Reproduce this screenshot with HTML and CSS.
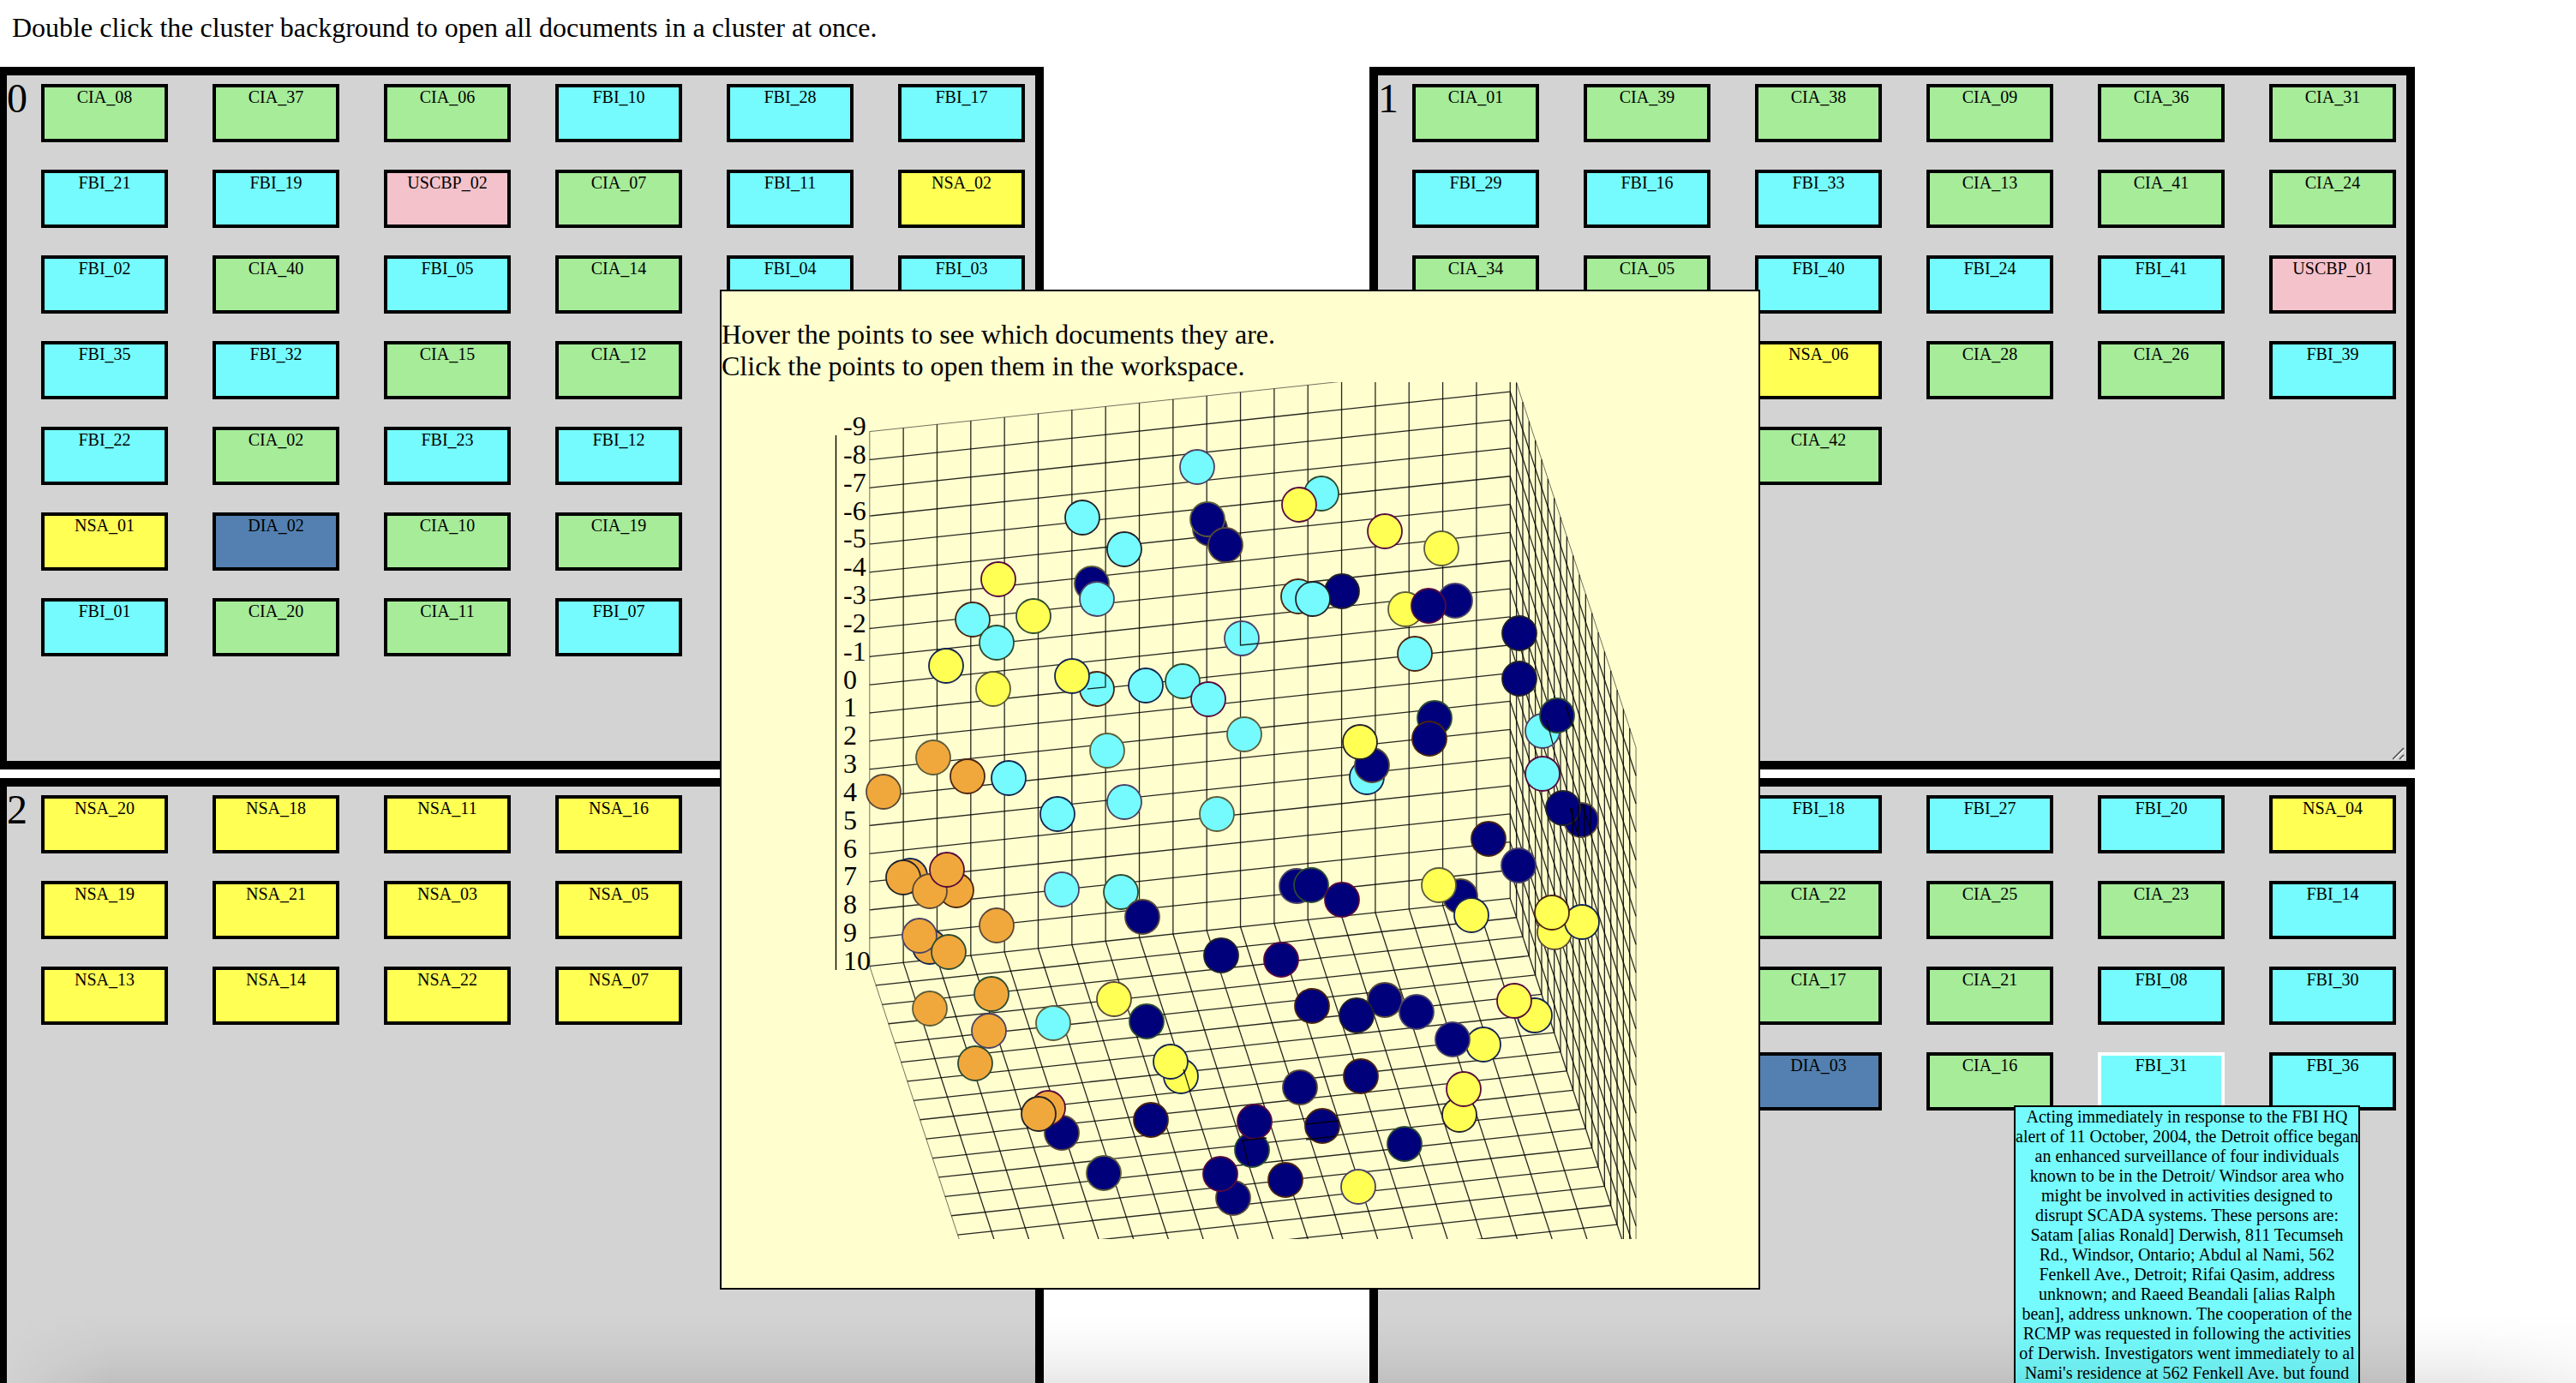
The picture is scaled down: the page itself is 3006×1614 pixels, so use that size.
FILE: index.html
```
<!DOCTYPE html>
<html lang="en">
<head>
<meta charset="utf-8">
<title>Document clusters</title>
<link rel="stylesheet" href="styles.css">
</head>
<body>
<p class="intro">Double click the cluster background to open all documents in a cluster at once.</p>

<main class="workspace">
  <section class="cluster">
    <h2 class="cluster-id">0</h2>
    <div class="docs">
      <button class="doc cia">CIA_08</button><button class="doc cia">CIA_37</button><button class="doc cia">CIA_06</button><button class="doc fbi">FBI_10</button><button class="doc fbi">FBI_28</button><button class="doc fbi">FBI_17</button>
      <button class="doc fbi">FBI_21</button><button class="doc fbi">FBI_19</button><button class="doc uscbp">USCBP_02</button><button class="doc cia">CIA_07</button><button class="doc fbi">FBI_11</button><button class="doc nsa">NSA_02</button>
      <button class="doc fbi">FBI_02</button><button class="doc cia">CIA_40</button><button class="doc fbi">FBI_05</button><button class="doc cia">CIA_14</button><button class="doc fbi">FBI_04</button><button class="doc fbi">FBI_03</button>
      <button class="doc fbi col-1">FBI_35</button><button class="doc fbi">FBI_32</button><button class="doc cia">CIA_15</button><button class="doc cia">CIA_12</button>
      <button class="doc fbi col-1">FBI_22</button><button class="doc cia">CIA_02</button><button class="doc fbi">FBI_23</button><button class="doc fbi">FBI_12</button>
      <button class="doc nsa col-1">NSA_01</button><button class="doc dia">DIA_02</button><button class="doc cia">CIA_10</button><button class="doc cia">CIA_19</button>
      <button class="doc fbi col-1">FBI_01</button><button class="doc cia">CIA_20</button><button class="doc cia">CIA_11</button><button class="doc fbi">FBI_07</button>
    </div>
  </section>

  <section class="cluster">
    <h2 class="cluster-id">1</h2>
    <div class="docs">
      <button class="doc cia">CIA_01</button><button class="doc cia">CIA_39</button><button class="doc cia">CIA_38</button><button class="doc cia">CIA_09</button><button class="doc cia">CIA_36</button><button class="doc cia">CIA_31</button>
      <button class="doc fbi">FBI_29</button><button class="doc fbi">FBI_16</button><button class="doc fbi">FBI_33</button><button class="doc cia">CIA_13</button><button class="doc cia">CIA_41</button><button class="doc cia">CIA_24</button>
      <button class="doc cia">CIA_34</button><button class="doc cia">CIA_05</button><button class="doc fbi">FBI_40</button><button class="doc fbi">FBI_24</button><button class="doc fbi">FBI_41</button><button class="doc uscbp">USCBP_01</button>
      <button class="doc nsa col-3">NSA_06</button><button class="doc cia">CIA_28</button><button class="doc cia">CIA_26</button><button class="doc fbi">FBI_39</button>
      <button class="doc cia col-3">CIA_42</button>
    </div>
    <svg class="grip" viewBox="0 0 16 16" aria-hidden="true"><path class="grip-light" d="M2 14 13 3M10 14 13 11"/><path class="grip-dark" d="M0 14 13 1M8 14 13 9"/></svg>
  </section>

  <section class="cluster">
    <h2 class="cluster-id">2</h2>
    <div class="docs">
      <button class="doc nsa">NSA_20</button><button class="doc nsa">NSA_18</button><button class="doc nsa">NSA_11</button><button class="doc nsa">NSA_16</button>
      <button class="doc nsa col-1">NSA_19</button><button class="doc nsa">NSA_21</button><button class="doc nsa">NSA_03</button><button class="doc nsa">NSA_05</button>
      <button class="doc nsa col-1">NSA_13</button><button class="doc nsa">NSA_14</button><button class="doc nsa">NSA_22</button><button class="doc nsa">NSA_07</button>
    </div>
  </section>

  <section class="cluster">
    <div class="cluster-id"></div>
    <div class="docs">
      <button class="doc fbi col-3">FBI_18</button><button class="doc fbi">FBI_27</button><button class="doc fbi">FBI_20</button><button class="doc nsa">NSA_04</button>
      <button class="doc cia col-3">CIA_22</button><button class="doc cia">CIA_25</button><button class="doc cia">CIA_23</button><button class="doc fbi">FBI_14</button>
      <button class="doc cia col-3">CIA_17</button><button class="doc cia">CIA_21</button><button class="doc fbi">FBI_08</button><button class="doc fbi">FBI_30</button>
      <button class="doc dia col-3">DIA_03</button><button class="doc cia">CIA_16</button>
      <div class="doc-open">
        <button class="doc fbi active" aria-describedby="preview">FBI_31</button>
        <div class="preview" id="preview" role="tooltip">Acting immediately in response to the FBI HQ<br>alert of 11 October, 2004, the Detroit office began<br>an enhanced surveillance of four individuals<br>known to be in the Detroit/ Windsor area who<br>might be involved in activities designed to<br>disrupt SCADA systems. These persons are:<br>Satam [alias Ronald] Derwish, 811 Tecumseh<br>Rd., Windsor, Ontario; Abdul al Nami, 562<br>Fenkell Ave., Detroit; Rifai Qasim, address<br>unknown; and Raeed Beandali [alias Ralph<br>bean], address unknown. The cooperation of the<br>RCMP was requested in following the activities<br>of Derwish. Investigators went immediately to al<br>Nami's residence at 562 Fenkell Ave. but found</div>
      </div>
      <button class="doc fbi">FBI_36</button>
    </div>
  </section>
</main>

<aside class="plot">
  <p class="plot-help">Hover the points to see which documents they are.<br>Click the points to open them in the workspace.</p>
  <svg class="chart" id="chart" viewBox="0 0 1210 1000" role="img" aria-label="3D scatter plot of documents"></svg>
</aside>
<div class="page-shade"></div>
<script src="chart.js"></script>
</body>
</html>
```
FILE: styles.css
```
* { box-sizing: border-box; }

html, body { height: 100%; }

body {
  position: relative;
  margin: 0;
  overflow: hidden;
  background: #fff;
  color: #000;
  font-family: "Liberation Serif", "Times New Roman", serif;
  font-size: 32px;
  line-height: 37px;
}

.intro {
  margin: 0;
  padding: 14px 14px 27px;
}

.workspace {
  display: grid;
  grid-template-columns: repeat(2, minmax(0, 1fr));
  gap: 10px 380px;
  margin-left: -2px;
  padding-right: 188px;
}

.cluster {
  position: relative;
  display: flex;
  min-height: 820px;
  border: 10px solid #000;
  background: #d3d3d3;
}

.cluster-id {
  flex: none;
  width: 40px;
  margin: 0;
  font-size: 48px;
  font-weight: 400;
  line-height: 54px;
}

.docs {
  flex: 1;
  display: grid;
  grid-template-columns: repeat(auto-fill, 148px);
  grid-auto-rows: 68px;
  align-content: start;
  gap: 32px 52px;
  padding-top: 10px;
}

.doc {
  display: flex;
  align-items: flex-start;
  justify-content: center;
  width: 148px;
  height: 68px;
  margin: 0;
  padding: 0;
  border: 4px solid #000;
  border-radius: 0;
  color: #000;
  font-family: inherit;
  font-size: 20px;
  line-height: 23px;
}

.cia { background: #a6ec99; }
.fbi { background: #75fbfd; }
.nsa { background: #ffff54; }
.uscbp { background: #f4c2cb; }
.dia { background: #5380b0; }
.active { border-color: #fff; }

.col-1 { grid-column-start: 1; }
.col-3 { grid-column-start: 3; }

.doc-open { position: relative; }

.preview {
  position: absolute;
  top: 62px;
  left: -98px;
  width: 404px;
  border: 2px solid #000;
  background: #75fbfd;
  font-size: 20px;
  line-height: 23px;
  text-align: center;
  white-space: nowrap;
}

.grip {
  position: absolute;
  right: 0;
  bottom: 0;
  width: 16px;
  height: 16px;
  fill: none;
}

.grip-light { stroke: #f0f0f0; stroke-width: 2; }
.grip-dark { stroke: #444; stroke-width: 1.5; }

.plot {
  position: absolute;
  top: 338px;
  left: 840px;
  width: 1214px;
  padding: 32px 0 57px;
  border: 2px solid #000;
  background: #fefecf;
}

.plot-help { margin: 0; }

.chart {
  display: block;
  width: 100%;
  overflow: hidden;
}

.chart text { font-size: 32px; }
.grid-line { fill: none; stroke: #000; stroke-width: 1.3; stroke-opacity: 0.85; }
.grid-edge { fill: none; stroke: #000; stroke-width: 1; stroke-opacity: 0.55; }
.axis { fill: none; stroke: #000; stroke-width: 1.4; }
.point { stroke-width: 1.8; cursor: pointer; }

.page-shade {
  position: absolute;
  right: 0;
  bottom: 0;
  left: 0;
  height: 80px;
  background: linear-gradient(to bottom, rgba(0, 0, 0, 0), rgba(0, 0, 0, 0.02) 35%, rgba(0, 0, 0, 0.05) 70%, rgba(0, 0, 0, 0.09));
  mask-image: linear-gradient(to right, transparent, #000 130px, #000 calc(100% - 130px), rgba(0, 0, 0, 0.5));
  pointer-events: none;
}
```
FILE: chart.js
```
const SVG_NS = 'http://www.w3.org/2000/svg';
const chart = document.getElementById('chart');

// Projection: origin of the back wall and the step of one grid cell on each axis.
const origin = [172.8, 57.6];
const stepX = [39.34, -4.17];
const stepY = [0, 32.84];
const stepZ = [7.34, 22.4];
const NX = 19, NY = 19, NZ = 20;

const fills = { c: '#75fbfd', n: '#00007b', y: '#ffff54', o: '#f0a83c' };
const rims = {
  purple: '#4a4266', maroon: '#560a3c', green: '#2c4a30', olive: '#5c5c3a',
  brown: '#4a2410', blue: '#122450', black: '#222228', taupe: '#594838'
};

// [fill, rim, x, y], listed back to front.
const points = [
  ['c', 'purple', 555, 99], ['c', 'black', 421, 158], ['c', 'black', 470, 195],
  ['n', 'taupe', 570, 171], ['n', 'olive', 567, 160], ['n', 'taupe', 588, 190],
  ['y', 'maroon', 323, 230], ['n', 'olive', 432, 235], ['c', 'purple', 438, 253],
  ['y', 'green', 364, 273], ['c', 'brown', 293, 277], ['c', 'green', 321, 304],
  ['y', 'blue', 262, 331], ['y', 'olive', 317, 358], ['c', 'brown', 438, 358],
  ['y', 'blue', 409, 343], ['c', 'blue', 495, 354], ['c', 'green', 538, 349],
  ['c', 'maroon', 568, 370], ['c', 'purple', 607, 299], ['c', 'olive', 610, 411],
  ['c', 'olive', 450, 430], ['o', 'olive', 247, 438], ['c', 'green', 700, 130],
  ['y', 'maroon', 674, 143], ['y', 'maroon', 774, 174], ['y', 'olive', 840, 194],
  ['n', 'black', 724, 244], ['c', 'brown', 673, 250], ['c', 'black', 690, 253],
  ['y', 'olive', 798, 265], ['n', 'purple', 856, 255], ['n', 'maroon', 825, 261],
  ['c', 'brown', 809, 317], ['n', 'black', 931, 293], ['n', 'black', 931, 346],
  ['n', 'green', 832, 392], ['n', 'brown', 826, 416], ['c', 'purple', 958, 407],
  ['n', 'green', 975, 389], ['c', 'blue', 335, 462], ['o', 'brown', 287, 460],
  ['o', 'taupe', 189, 478], ['c', 'blue', 392, 504], ['c', 'purple', 470, 490],
  ['c', 'olive', 578, 504], ['o', 'blue', 220, 576], ['o', 'black', 212, 578],
  ['o', 'brown', 274, 593], ['o', 'taupe', 243, 594], ['o', 'maroon', 263, 569],
  ['c', 'purple', 397, 592], ['c', 'green', 466, 595], ['n', 'taupe', 491, 624],
  ['o', 'taupe', 321, 634], ['o', 'blue', 243, 659], ['o', 'purple', 231, 646],
  ['o', 'green', 265, 665], ['n', 'black', 583, 669], ['o', 'green', 315, 714],
  ['o', 'olive', 243, 731], ['o', 'purple', 312, 757], ['o', 'green', 296, 795],
  ['c', 'olive', 387, 748], ['y', 'taupe', 458, 720], ['n', 'green', 496, 746],
  ['y', 'blue', 536, 810], ['y', 'blue', 524, 793], ['n', 'taupe', 397, 876],
  ['o', 'maroon', 381, 847], ['o', 'black', 370, 854], ['n', 'brown', 501, 861],
  ['n', 'olive', 446, 923], ['n', 'taupe', 597, 952], ['n', 'maroon', 582, 924],
  ['c', 'blue', 753, 461], ['n', 'taupe', 759, 447], ['y', 'black', 745, 420],
  ['c', 'maroon', 958, 457], ['n', 'taupe', 1003, 511], ['n', 'black', 982, 497],
  ['n', 'brown', 895, 533], ['n', 'purple', 930, 564], ['n', 'purple', 671, 588],
  ['n', 'green', 688, 587], ['n', 'maroon', 724, 604], ['n', 'taupe', 862, 600],
  ['y', 'olive', 837, 587], ['y', 'blue', 875, 622], ['y', 'taupe', 972, 642],
  ['y', 'blue', 1004, 630], ['y', 'brown', 969, 619], ['n', 'maroon', 653, 674],
  ['n', 'brown', 689, 728], ['n', 'taupe', 774, 721], ['n', 'black', 741, 739],
  ['n', 'purple', 811, 735], ['y', 'blue', 949, 739], ['y', 'maroon', 925, 722],
  ['y', 'blue', 889, 773], ['n', 'purple', 853, 767], ['n', 'brown', 746, 810],
  ['n', 'taupe', 675, 823], ['y', 'black', 861, 855], ['y', 'maroon', 866, 825],
  ['n', 'green', 619, 896], ['n', 'maroon', 622, 863], ['n', 'brown', 701, 868],
  ['n', 'green', 797, 889], ['n', 'brown', 658, 931], ['y', 'purple', 743, 939]
];

function add(name, attrs, text) {
  const node = document.createElementNS(SVG_NS, name);
  for (const key in attrs) node.setAttribute(key, attrs[key]);
  if (text !== undefined) node.textContent = text;
  chart.appendChild(node);
}

function project(i, j, k) {
  return [0, 1].map(a => (origin[a] + i * stepX[a] + j * stepY[a] + k * stepZ[a]).toFixed(2)).join(' ');
}

function line(from, to, edge) {
  add('path', { class: edge ? 'grid-edge' : 'grid-line', d: 'M' + project(...from) + 'L' + project(...to) });
}

// Back wall
for (let i = 0; i <= NX; i++) line([i, 0, 0], [i, NY, 0], i === 0);
for (let j = 0; j <= NY; j++) line([0, j, 0], [NX, j, 0], j === 0);
// Right wall
for (let k = 1; k <= NZ; k++) line([NX, 0, k], [NX, NY, k], k === NZ);
for (let j = 0; j <= NY; j++) line([NX, j, 0], [NX, j, NZ], j === 0);
// Floor
for (let i = 0; i < NX; i++) line([i, NY, 0], [i, NY, NZ], i === 0);
for (let k = 1; k <= NZ; k++) line([0, NY, k], [NX, NY, k], false);

// Vertical scale
add('path', { class: 'axis', d: 'M133.5 62V686' });
for (let v = -9; v <= 10; v++) {
  add('text', { x: 142, y: Math.round(62 + (v + 9) * 32.84) }, v);
}

for (const [fill, rim, x, y] of points) {
  add('circle', { class: 'point', cx: x, cy: y, r: 20, fill: fills[fill], stroke: rims[rim] });
}

// Grid segments that pass in front of the points behind them
const front = [
  'M605.5 280V307L626 305', 'M448 342V356L427 358',
  'M963 395 970 422M985 377 993 402',
  'M993 497V530M1000 493V531M1007 493V531M1014 494V528M990 497 1000 530M1004 492 1015 526',
  'M607 885 636 882M608 885 615 913', 'M682 866 720 862M682 884 716 880', 'M539 802 547 828'
];
for (const d of front) add('path', { class: 'grid-line', d });
```
